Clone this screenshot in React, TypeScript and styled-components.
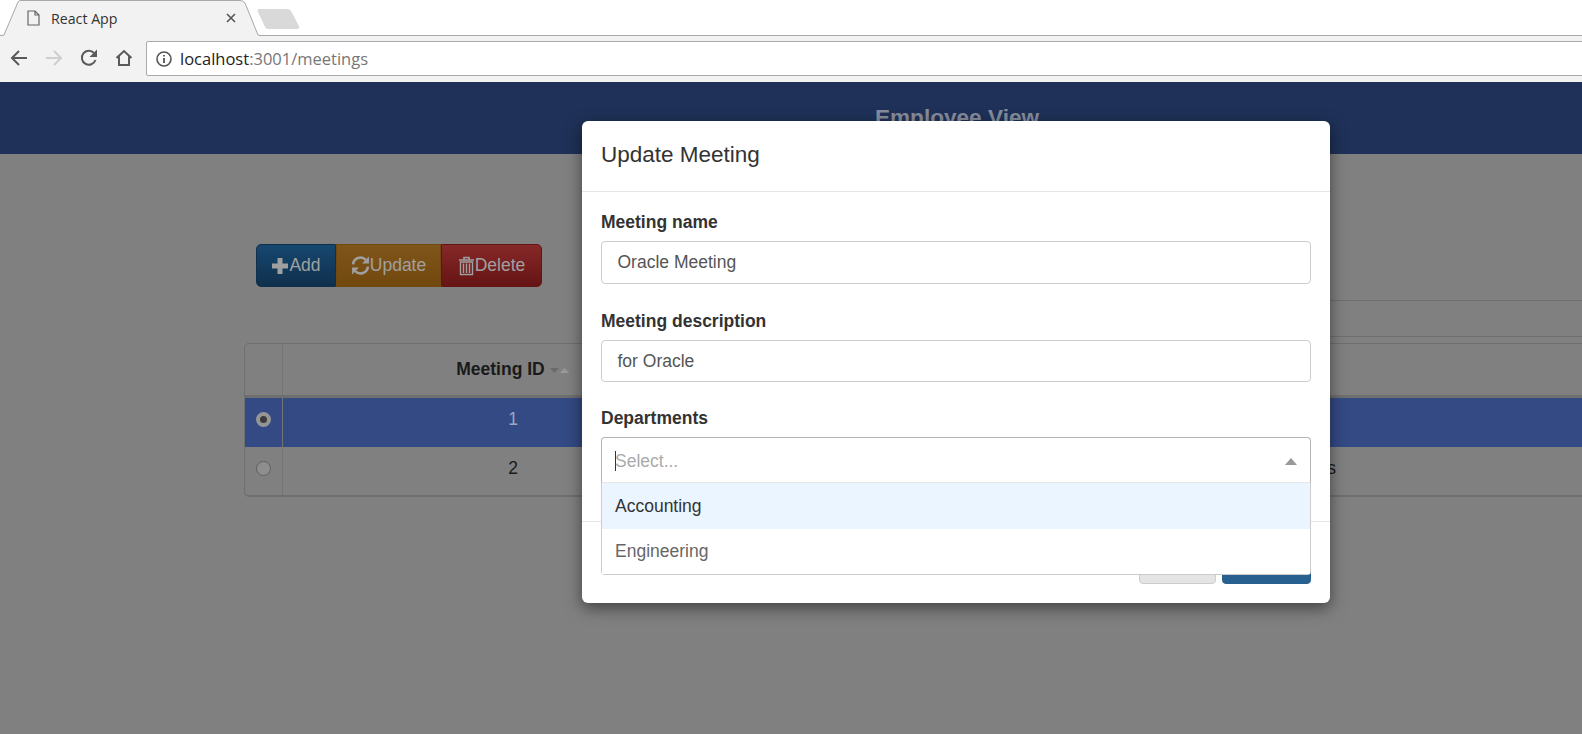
import React from 'react';
import styled, { createGlobalStyle } from 'styled-components';

const GlobalStyle = createGlobalStyle`
  html, body {
    margin: 0;
    padding: 0;
    height: 100%;
    overflow: hidden;
    background: #808080;
    font-family: "Liberation Sans", Arial, sans-serif;
  }
`;

const Screen = styled.div`
  position: relative;
  width: 1582px;
  height: 734px;
  overflow: hidden;
  background: #808080;
`;

/* browser chrome */
const TabStrip = styled.div`
  height: 35px;
  background: #fff;
  border-bottom: 1px solid #a8a8a8;
  display: flex;
  align-items: flex-start;
`;

const Tab = styled.div`
  position: relative;
  width: 261px;
  height: 36px;
  display: flex;
  align-items: center;
  padding-left: 27px;
  box-sizing: border-box;
  font-family: "Open Sans", sans-serif;
  font-size: 14.2px;
  color: #333;
`;

const TabShape = styled.svg`
  position: absolute;
  left: 0;
  top: 0;
`;

const TabIcon = styled.svg`
  position: relative;
  margin-right: 11px;
`;

const TabTitle = styled.span`
  position: relative;
  width: 175px;
`;

const TabClose = styled.svg`
  position: relative;
`;

const NewTab = styled.svg`
  margin: 8px 0 0 -4px;
`;

const Toolbar = styled.div`
  height: 46px;
  box-sizing: border-box;
  background: #f2f2f2;
  padding-top: 5px;
  display: flex;
  align-items: flex-start;
`;

const NavButton = styled.svg<{ $gap: number }>`
  margin: 8px 0 0 ${({ $gap }) => $gap}px;
  flex: none;
`;

const AddressBar = styled.div`
  margin-left: 13px;
  width: 1500px;
  flex: none;
  height: 35px;
  box-sizing: border-box;
  background: #fff;
  border: 1px solid #a9a9a9;
  border-radius: 2px;
  display: flex;
  align-items: center;
  padding-left: 9px;
  font-family: "Open Sans", sans-serif;
  font-size: 16.5px;
  color: #222;
`;

const UrlRest = styled.span`
  color: #777;
`;

const InfoIcon = styled.svg`
  margin-right: 8px;
`;

/* page behind the dialog */
const Banner = styled.header`
  height: 72px;
  background: #1f3158;
  display: flex;
  justify-content: center;
  padding: 22px 0 0 332px;
  box-sizing: border-box;
  font-size: 22.6px;
  font-weight: 700;
  line-height: 28px;
  color: #858c9b;
`;

const Content = styled.main`
  padding: 90px 0 0 244px;
  width: 1600px;
  box-sizing: border-box;
`;

const ButtonGroup = styled.div`
  display: flex;
  margin-left: 12px;
  height: 43px;
`;

const ActionButton = styled.button<{ $width: number; $top: string; $bottom: string; $first?: boolean; $last?: boolean }>`
  width: ${({ $width }) => $width}px;
  height: 43px;
  padding: 0;
  border: 1px solid ${({ $bottom }) => $bottom};
  border-radius: ${({ $first, $last }) => ($first ? '5px 0 0 5px' : $last ? '0 5px 5px 0' : '0')};
  background: linear-gradient(to bottom, ${({ $top }) => $top}, ${({ $bottom }) => $bottom});
  color: #a0a0a0;
  font-family: inherit;
  font-size: 17.5px;
  display: flex;
  align-items: center;
  justify-content: center;
`;

const SearchBox = styled.div`
  margin: 13px 0 6px 800px;
  height: 37px;
  box-sizing: border-box;
  border: 1px solid #6e6e6e;
  border-right: 0;
  border-radius: 4px 0 0 4px;
`;

const Table = styled.div`
  border: 1px solid #6f6f6f;
  border-bottom-width: 2px;
  border-radius: 5px;
  overflow: hidden;
`;

const TableRow = styled.div<{ $kind: 'head' | 'selected' | 'plain' }>`
  display: grid;
  grid-template-columns: 38px 460px 462px 158px 1fr;
  height: ${({ $kind }) => ($kind === 'head' ? 54 : $kind === 'selected' ? 49 : 48)}px;
  box-sizing: border-box;
  align-items: stretch;
  font-size: 17.5px;
  background: ${({ $kind }) => ($kind === 'selected' ? '#344a85' : 'transparent')};
  color: ${({ $kind }) => ($kind === 'selected' ? '#9ea7bd' : '#1a1a1a')};
  font-weight: ${({ $kind }) => ($kind === 'head' ? 700 : 400)};
  border-bottom: ${({ $kind }) => ($kind === 'head' ? '3px solid #6f6f6f' : '0')};
`;

const CheckCell = styled.div<{ $raised?: boolean }>`
  display: flex;
  align-items: center;
  justify-content: center;
  border-right: 1px solid #757575;
  padding-bottom: ${({ $raised }) => ($raised ? 6 : 0)}px;
`;

const Cell = styled.div<{ $raised?: boolean }>`
  display: flex;
  align-items: center;
  justify-content: center;
  white-space: nowrap;
  padding-bottom: ${({ $raised }) => ($raised ? 6 : 0)}px;
`;

const Radio = styled.span<{ $checked?: boolean }>`
  width: 15px;
  height: 15px;
  box-sizing: border-box;
  border-radius: 50%;
  border: ${({ $checked }) => ($checked ? '4px solid #959595' : '1px solid #5f5f5f')};
  background: ${({ $checked }) => ($checked ? '#3a3a3a' : '#8e8e8e')};
`;

const SortCarets = styled.svg`
  margin-left: 5px;
`;

/* dialog */
const Modal = styled.section`
  position: absolute;
  left: 582px;
  top: 121px;
  width: 748px;
  height: 482px;
  box-sizing: border-box;
  background: #fff;
  border-radius: 6px;
  box-shadow: 0 5px 16px rgba(0, 0, 0, 0.5);
  color: #333;
  display: flex;
  flex-direction: column;
`;

const ModalHeader = styled.div`
  height: 71px;
  box-sizing: border-box;
  border-bottom: 1px solid #e5e5e5;
  padding: 0 19px 2px;
  display: flex;
  align-items: center;
`;

const ModalTitle = styled.h4`
  margin: 0;
  font-size: 22.5px;
  font-weight: 400;
  color: #333;
`;

const ModalBody = styled.div`
  padding: 20px 19px 0;
  height: 330px;
  box-sizing: border-box;
  border-bottom: 1px solid #e5e5e5;
`;

const Field = styled.div<{ $gap: number }>`
  margin-bottom: ${({ $gap }) => $gap}px;
`;

const Label = styled.label`
  display: block;
  font-size: 17.5px;
  line-height: 20px;
  font-weight: 700;
  margin-bottom: 9px;
  color: #333;
`;

const Input = styled.div<{ $height: number }>`
  height: ${({ $height }) => $height}px;
  box-sizing: border-box;
  border: 1px solid #ccc;
  border-radius: 4px;
  padding: 0 15.5px;
  display: flex;
  align-items: center;
  font-size: 17.5px;
  color: #555;
`;

const SelectWrap = styled.div`
  position: relative;
`;

const SelectControl = styled.div`
  height: 46px;
  box-sizing: border-box;
  border: 1px solid #b3b3b3;
  border-bottom-color: #e6e6e6;
  border-radius: 4px 4px 0 0;
  display: flex;
  align-items: center;
  justify-content: space-between;
  padding: 2px 13px 0;
  font-size: 17.5px;
  color: #aaa;
`;

const Placeholder = styled.span`
  border-left: 1px solid #333;
  line-height: 20px;
  text-indent: -1px;
`;

const SelectArrow = styled.span`
  width: 0;
  height: 0;
  border-style: solid;
  border-width: 0 6.5px 7px;
  border-color: transparent transparent #999;
`;

const Menu = styled.div`
  position: absolute;
  z-index: 2;
  left: 0;
  right: 0;
  top: 100%;
  box-sizing: border-box;
  background: #fff;
  border: 1px solid #ccc;
  border-top: 0;
  border-radius: 0 0 4px 4px;
`;

const Option = styled.div<{ $focused?: boolean }>`
  height: ${({ $focused }) => ($focused ? 46 : 45)}px;
  display: flex;
  align-items: center;
  padding: 0 13px;
  font-size: 17.5px;
  background: ${({ $focused }) => ($focused ? '#ebf5ff' : '#fff')};
  color: ${({ $focused }) => ($focused ? '#333' : '#666')};
`;

const ModalFooter = styled.div`
  flex: 1;
  padding: 19px 19px 0;
  display: flex;
  justify-content: flex-end;
  gap: 6px;
`;

const FooterButton = styled.button<{ $primary?: boolean }>`
  width: ${({ $primary }) => ($primary ? 89 : 77)}px;
  height: 43px;
  border-radius: 4px;
  border: 1px solid ${({ $primary }) => ($primary ? '#265f91' : '#ccc')};
  background: ${({ $primary }) => ($primary ? '#28608f' : '#e4e4e4')};
`;

const Glyph = styled.svg`
  flex: none;
`;

export default function App() {
  return (
    <Screen>
      <GlobalStyle />
      <TabStrip>
        <Tab>
          <TabShape width="261" height="36" viewBox="0 0 261 36">
            <path d="M0 36 L4 35 L18 2 Q19 .5 21 .5 L240 .5 Q243 .5 245 3 L258 35 L261 36 Z" fill="#f2f2f2" />
            <path d="M0 35.5 L4 35 L18 2 Q19 .5 21 .5 L240 .5 Q243 .5 245 3 L258 35 L261 35.5" fill="none" stroke="#a8a8a8" />
          </TabShape>
          <TabIcon width="13" height="16" viewBox="0 0 13 16">
            <path d="M1 1 H8 L12 5 V15 H1 Z M8 1 V5 H12" fill="none" stroke="#666" strokeWidth="1.2" />
          </TabIcon>
          <TabTitle>React App</TabTitle>
          <TabClose width="10" height="10" viewBox="0 0 10 10">
            <path d="M1 1 L9 9 M9 1 L1 9" stroke="#555" strokeWidth="1.6" />
          </TabClose>
        </Tab>
        <NewTab width="45" height="22" viewBox="0 0 45 22">
          <path d="M2 1 H30 Q33 1 34 3 L42 18 Q43 21 40 21 H11 Q9 21 8 19 L1 4 Q0 1 2 1 Z" fill="#d9d9d9" />
        </NewTab>
      </TabStrip>
      <Toolbar>
        <NavButton $gap={10} width="18" height="18" viewBox="0 0 18 18">
          <path d="M17 9 H2 M9 2 L2 9 L9 16" fill="none" stroke="#5a5a5a" strokeWidth="2" />
        </NavButton>
        <NavButton $gap={17} width="18" height="18" viewBox="0 0 18 18">
          <path d="M1 9 H16 M9 2 L16 9 L9 16" fill="none" stroke="#cfcfcf" strokeWidth="2" />
        </NavButton>
        <NavButton $gap={17} width="18" height="18" viewBox="0 0 18 18">
          <path d="M15.5 11 A7 7 0 1 1 14 4" fill="none" stroke="#5a5a5a" strokeWidth="2" />
          <path d="M17 0.5 V8 H9.5 Z" fill="#5a5a5a" />
        </NavButton>
        <NavButton $gap={17} width="18" height="18" viewBox="0 0 18 18">
          <path d="M1.5 9 L9 2 L16.5 9 M4 7.5 V16 H14 V7.5" fill="none" stroke="#5a5a5a" strokeWidth="2" />
        </NavButton>
        <AddressBar>
          <InfoIcon width="16" height="16" viewBox="0 0 16 16">
            <circle cx="8" cy="8" r="7" fill="none" stroke="#555" strokeWidth="1.6" />
            <path d="M8 7 V12 M8 4 V5.6" stroke="#555" strokeWidth="1.8" />
          </InfoIcon>
          localhost<UrlRest>:3001/meetings</UrlRest>
        </AddressBar>
      </Toolbar>

      <Banner>Employee View</Banner>
      <Content>
        <ButtonGroup>
          <ActionButton $width={80} $top="#174770" $bottom="#0f304c" $first>
            <Glyph width="18" height="18" viewBox="0 0 18 18">
              <path d="M6.5 1 H11.5 V6.5 H17 V11.5 H11.5 V17 H6.5 V11.5 H1 V6.5 H6.5 Z" fill="#a0a0a0" />
            </Glyph>
            Add
          </ActionButton>
          <ActionButton $width={105} $top="#80551c" $bottom="#71480d">
            <Glyph width="19" height="19" viewBox="0 0 18 18">
              <path d="M2 8 A7 7 0 0 1 14 3.6 M16 10 A7 7 0 0 1 4 14.4" fill="none" stroke="#a0a0a0" strokeWidth="2.4" />
              <path d="M17 0.5 V7 H10.5 Z M1 17.5 V11 H7.5 Z" fill="#a0a0a0" />
            </Glyph>
            Update
          </ActionButton>
          <ActionButton $width={101} $top="#862828" $bottom="#651414" $last>
            <Glyph width="17" height="20" viewBox="0 0 17 19">
              <path d="M1 3.5 H16 M6 3 V1 H11 V3" fill="none" stroke="#a0a0a0" strokeWidth="1.6" />
              <path d="M2.5 5.5 H14.5 V18 H2.5 Z M5.5 7 V16.5 M8.5 7 V16.5 M11.5 7 V16.5" fill="none" stroke="#a0a0a0" strokeWidth="1.4" />
            </Glyph>
            Delete
          </ActionButton>
        </ButtonGroup>
        <SearchBox />
        <Table>
          <TableRow $kind="head">
            <CheckCell />
            <Cell>
              Meeting ID
              <SortCarets width="20" height="6" viewBox="0 0 20 6">
                <path d="M0 1 H9 L4.5 6 Z" fill="#6b6b6b" />
                <path d="M10 6 H19 L14.5 1 Z" fill="#9a9a9a" />
              </SortCarets>
            </Cell>
            <Cell>Meeting name</Cell>
            <Cell />
            <Cell />
          </TableRow>
          <TableRow $kind="selected">
            <CheckCell $raised><Radio $checked /></CheckCell>
            <Cell $raised>1</Cell>
            <Cell $raised>Oracle Meeting</Cell>
            <Cell $raised>for Oracle</Cell>
            <Cell />
          </TableRow>
          <TableRow $kind="plain">
            <CheckCell $raised><Radio /></CheckCell>
            <Cell $raised>2</Cell>
            <Cell $raised>Team Meeting</Cell>
            <Cell $raised>for Engineers</Cell>
            <Cell />
          </TableRow>
        </Table>
      </Content>

      <Modal>
        <ModalHeader>
          <ModalTitle>Update Meeting</ModalTitle>
        </ModalHeader>
        <ModalBody>
          <Field $gap={27}>
            <Label>Meeting name</Label>
            <Input $height={43}>Oracle Meeting</Input>
          </Field>
          <Field $gap={26}>
            <Label>Meeting description</Label>
            <Input $height={42}>for Oracle</Input>
          </Field>
          <Field $gap={0}>
            <Label>Departments</Label>
            <SelectWrap>
              <SelectControl>
                <Placeholder>Select...</Placeholder>
                <SelectArrow />
              </SelectControl>
              <Menu>
                <Option $focused>Accounting</Option>
                <Option>Engineering</Option>
              </Menu>
            </SelectWrap>
          </Field>
        </ModalBody>
        <ModalFooter>
          <FooterButton />
          <FooterButton $primary />
        </ModalFooter>
      </Modal>
    </Screen>
  );
}
